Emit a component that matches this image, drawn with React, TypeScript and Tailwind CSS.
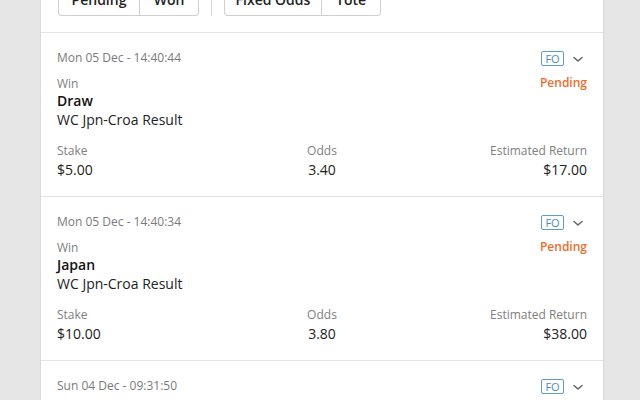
import React from "react";

type Bet = {
  date: string;
  type: string;
  selection: string;
  market: string;
  stake: string;
  odds: string;
  ret: string;
  status?: string;
};

const bets: Bet[] = [
  {
    date: "Mon 05 Dec - 14:40:44",
    type: "Win",
    selection: "Draw",
    market: "WC Jpn-Croa Result",
    stake: "$5.00",
    odds: "3.40",
    ret: "$17.00",
    status: "Pending",
  },
  {
    date: "Mon 05 Dec - 14:40:34",
    type: "Win",
    selection: "Japan",
    market: "WC Jpn-Croa Result",
    stake: "$10.00",
    odds: "3.80",
    ret: "$38.00",
    status: "Pending",
  },
  {
    date: "Sun 04 Dec - 09:31:50",
    type: "Win",
    selection: "Croatia",
    market: "WC Jpn-Croa Result",
    stake: "$5.00",
    odds: "2.40",
    ret: "$12.00",
    status: "Pending",
  },
];

function Chevron() {
  return (
    <svg width="12" height="12" viewBox="0 0 12 12" className="ml-[8px]">
      <path d="M2 4.5 L6 8 L10 4.5" fill="none" stroke="#666666" strokeWidth="1.6" strokeLinecap="round" strokeLinejoin="round" />
    </svg>
  );
}

function BetCard({ bet }: { bet: Bet }) {
  return (
    <div className="px-4 pt-[16px] pb-[16px] border-b border-[#e4e4e4]">
      <div className="flex items-center justify-between h-[18px]">
        <span className="text-[12px] leading-[18px] text-[#7a7a7a]">{bet.date}</span>
        <div className="flex items-center mt-[1px] mr-[3px]">
          <span className="flex items-center justify-center w-[23px] h-[15px] border border-[#5d9bd1] rounded-[2px] text-[11px] leading-none text-[#4a8cc6]">
            FO
          </span>
          <Chevron />
        </div>
      </div>
      <div className="flex justify-between mt-[9px]">
        <div>
          <div className="text-[12px] leading-[16px] text-[#808080]">{bet.type}</div>
          <div className="text-[14px] leading-[18px] font-semibold text-[#111]">{bet.selection}</div>
          <div className="text-[14px] leading-[19px] text-[#222]">{bet.market}</div>
        </div>
        <div className="text-[12px] leading-[18px] font-semibold text-[#ee6d2b] -mt-[2px]">{bet.status}</div>
      </div>
      <div className="grid grid-cols-3 mt-[13px]">
        <div>
          <div className="text-[12px] leading-[18px] text-[#808080]">Stake</div>
          <div className="text-[14px] leading-[20px] text-[#222]">{bet.stake}</div>
        </div>
        <div className="text-center">
          <div className="text-[12px] leading-[18px] text-[#808080]">Odds</div>
          <div className="text-[14px] leading-[20px] text-[#222]">{bet.odds}</div>
        </div>
        <div className="text-right">
          <div className="text-[12px] leading-[18px] text-[#808080]">Estimated Return</div>
          <div className="text-[14px] leading-[20px] text-[#222]">{bet.ret}</div>
        </div>
      </div>
    </div>
  );
}

export default function App() {
  return (
    <div
      className="h-[400px] overflow-hidden bg-[#e6e6e6]"
      style={{ fontFamily: '"Open Sans", "Noto Sans", sans-serif' }}
    >
      <div className="ml-[40px] w-[564px] bg-white border-x border-[#dadada] -mt-4">
        <div className="px-4 pb-4 border-b border-[#e4e4e4]">
          <div className="flex items-stretch h-8 ml-px">
            <div className="flex border border-t-0 border-[#cfcfcf] rounded-b-[4px]">
              <div className="w-[81px] flex items-center justify-center text-[14px] font-semibold text-[#222] border-r border-[#cfcfcf]">Pending</div>
              <div className="w-[58px] flex items-center justify-center text-[14px] font-semibold text-[#222]">Won</div>
            </div>
            <div className="w-px bg-[#d6d6d6] ml-[12px] mr-[12px]" />
            <div className="flex border border-t-0 border-[#cfcfcf] rounded-b-[4px]">
              <div className="w-[97px] flex items-center justify-center text-[14px] font-semibold text-[#222] border-r border-[#cfcfcf]">Fixed Odds</div>
              <div className="w-[58px] flex items-center justify-center text-[14px] font-semibold text-[#222]">Tote</div>
            </div>
          </div>
        </div>
        {bets.map((b, i) => (
          <BetCard key={i} bet={b} />
        ))}
      </div>
    </div>
  );
}
